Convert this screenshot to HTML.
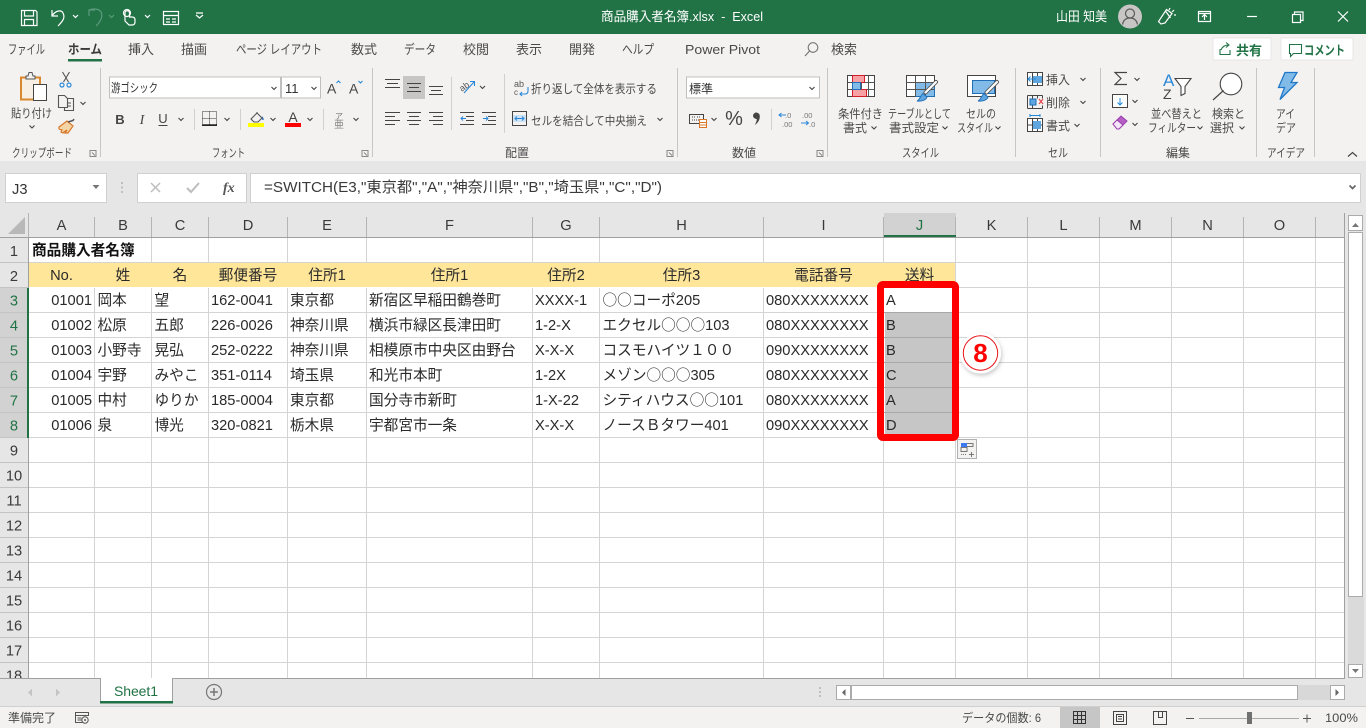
<!DOCTYPE html>
<html lang="ja"><head><meta charset="utf-8"><title>商品購入者名簿.xlsx - Excel</title>
<style>
html,body{margin:0;padding:0;background:#e6e6e6;overflow:hidden}
svg{display:block;position:absolute;left:0;top:0}
text{font-family:"Liberation Sans","Noto Sans CJK JP",sans-serif}
tspan.o{font-family:"Noto Sans CJK JP",sans-serif}
.t{font-size:13px;fill:#4a4a4a}
.r{font-size:12px;fill:#4a4a4a}
.w{font-size:13px;fill:#fff}
.c{font-size:14.67px;fill:#2a2a2a}
.m{text-anchor:middle}
.h{font-size:14.67px;fill:#3a3a3a;text-anchor:middle}
.g{fill:#217346}
.sf{font-family:"Liberation Serif",serif}
</style></head><body>
<svg width="1366" height="728" viewBox="0 0 1366 728" xmlns="http://www.w3.org/2000/svg">
<!-- backgrounds -->
<rect width="1366" height="728" fill="#e6e6e6"/>
<rect width="1366" height="34" fill="#217346"/>
<rect y="34" width="1366" height="127" fill="#f3f2f1"/>

<!-- QAT icons -->
<g fill="none" stroke="#fff" stroke-width="1.2">
<path d="M21.500 10.500h14l1.500 1.500v13.500h-15.500z"/><path d="M24.500 10.500v5.500h9v-5.500M24.500 25.500v-6h9v6"/>
<path d="M52 10v6h6M52 16c3-5 9-7 11-3 2 4 1 7-5 13"/>
<path d="M73 15l2.500 2.500 2.500-2.500M145 15l2.500 2.500 2.500-2.500"/>
<path d="M125 21v-8a2.200 2.200 0 0 1 4.500 0v4h2.500c2 0 3 1 3 3v2c0 2-1 3-3 3h-3l-4-4z"/><circle cx="127" cy="13" r="3.500"/>
<rect x="163.500" y="11.500" width="15" height="13"/><path d="M163.500 15.500h15M166 19h4M172 19h4M166 22h4M172 22h4"/>
<path d="M196 15l3.500 3 3.500-3M196 13h7"/>
</g>
<path d="M89 16v-6h6M89 10c5-2 10-1 12 2 2 4 0 9-5 14M109 15l2.500 2.500 2.500-2.500" fill="none" stroke="#5c9a7c" stroke-width="1.200"/>

<!-- title -->
<text x="601" y="21" class="w" textLength="162" lengthAdjust="spacingAndGlyphs">商品購入者名簿.xlsx &#160;- &#160;Excel</text>
<text x="1056" y="21" class="w" textLength="51" lengthAdjust="spacingAndGlyphs">山田 知美</text>
<circle cx="1130" cy="16.500" r="12" fill="#c8c6c4"/>
<g fill="none" stroke="#5a5a5a" stroke-width="1.200"><circle cx="1130" cy="13.500" r="4.500"/><path d="M1122.500 24.500c1-5 4-6.500 7.500-6.500s6.500 1.500 7.500 6.500"/></g>
<g fill="none" stroke="#fff" stroke-width="1.200">
<path d="M1161 24l-2.500-2.500 8-12 5.500 4-7 9.500zM1165.500 11l5 7M1172 12l2-2M1174 15h2M1169 10l1-2"/>
<rect x="1198.500" y="11.500" width="12" height="10"/><path d="M1198.500 13.500h12M1204.500 20v-5M1202 17l2.500-2.500 2.500 2.500"/>
<path d="M1247 16.500h10"/>
<rect x="1292.500" y="14.500" width="8" height="8"/><path d="M1294.500 14.500v-2.500h8.500v8.500h-2.500"/>
<path d="M1338 11.500l10 10M1348 11.500l-10 10"/>
</g>

<!-- tabs -->
<text x="8" y="54" class="t" textLength="37" lengthAdjust="spacingAndGlyphs">ファイル</text>
<text x="68" y="54" class="t" font-weight="700" textLength="34" lengthAdjust="spacingAndGlyphs" style="fill:#3a3a3a">ホーム</text>
<text x="128" y="54" class="t" textLength="26" lengthAdjust="spacingAndGlyphs">挿入</text>
<text x="181" y="54" class="t" textLength="26" lengthAdjust="spacingAndGlyphs">描画</text>
<text x="236" y="54" class="t" textLength="86" lengthAdjust="spacingAndGlyphs">ページ レイアウト</text>
<text x="351" y="54" class="t" textLength="26" lengthAdjust="spacingAndGlyphs">数式</text>
<text x="404" y="54" class="t" textLength="32" lengthAdjust="spacingAndGlyphs">データ</text>
<text x="463" y="54" class="t" textLength="26" lengthAdjust="spacingAndGlyphs">校閲</text>
<text x="516" y="54" class="t" textLength="26" lengthAdjust="spacingAndGlyphs">表示</text>
<text x="569" y="54" class="t" textLength="26" lengthAdjust="spacingAndGlyphs">開発</text>
<text x="622" y="54" class="t" textLength="32" lengthAdjust="spacingAndGlyphs">ヘルプ</text>
<text x="685" y="54" class="t" textLength="75" lengthAdjust="spacingAndGlyphs">Power Pivot</text>
<text x="831" y="54" class="t" textLength="26" lengthAdjust="spacingAndGlyphs">検索</text>
<rect x="68" y="59" width="34" height="2.500" class="g"/>
<path d="M805 56l5-5.500" stroke="#777" stroke-width="1.200" fill="none"/><circle cx="813" cy="47.500" r="4.800" fill="none" stroke="#777" stroke-width="1.100"/>

<!-- share / comment -->
<rect x="1213" y="38" width="58" height="22" rx="1" fill="#fff" stroke="#e8e6e4"/>
<rect x="1281" y="38" width="72" height="22" rx="1" fill="#fff" stroke="#e8e6e4"/>
<path d="M1220 49v5.500h10V50M1221 50c1-3 4-5 7-5M1226 42.500l3 2.500-3 2.500" fill="none" stroke="#217346" stroke-width="1.100"/>
<path d="M1289.500 44.500h12v9h-8l-3 3v-3h-1z" fill="none" stroke="#217346" stroke-width="1.100"/>
<text x="1236" y="55" font-size="13" font-weight="700" fill="#217346" textLength="26" lengthAdjust="spacingAndGlyphs">共有</text>
<text x="1304" y="55" font-size="13" font-weight="700" fill="#217346" textLength="41" lengthAdjust="spacingAndGlyphs">コメント</text>

<!-- ribbon separators -->
<path d="M100.500 68v89M372.500 68v89M677.500 68v89M827.500 68v89M1015.500 68v89M1100.500 68v89M1256.500 68v89M1314.500 68v89" stroke="#c8c6c4" fill="none"/>
<path d="M194.500 109v21M240.500 109v21M323.500 109v21M451.500 77v53M504.500 74v59M771.500 109v21" stroke="#d2d0ce" fill="none"/>

<!-- Clipboard -->
<path d="M21 77.500h19v22h-19z" fill="#f8efe4" stroke="#d8882e" stroke-width="2"/>
<path d="M26 79h9v-3h-2l-1-3.500h-3l-1 3.500h-2z" fill="#f3f2f1" stroke="#555"/>
<rect x="33.500" y="84.500" width="13" height="16" fill="#fff" stroke="#444"/>
<text x="11" y="117.500" class="r" textLength="41" lengthAdjust="spacingAndGlyphs">貼り付け</text>
<g fill="none" stroke="#555" stroke-width="1.100"><path d="M62.500 72l6 10M69.500 72l-6 10"/>
<path d="M58.500 95.500h6l3 3v9h-9zM67.500 98.500h6v12h-9v-3"/><path d="M67 103h4M67 106h4"/>
</g>
<circle cx="62" cy="85" r="2" fill="none" stroke="#2b88d8" stroke-width="1.200"/><circle cx="69" cy="85" r="2" fill="none" stroke="#2b88d8" stroke-width="1.200"/>
<path d="M59 127l8-6 6 5-5 7h-3l2-3-3 2-1 1-2-1 1-2-3-1z" fill="#f5d5a6" stroke="#d8782a" stroke-width="1.200"/>
<path d="M68 122l5-1.500 1-1.500" fill="none" stroke="#555" stroke-width="1.500"/>
<text x="12" y="157" class="r" textLength="60" lengthAdjust="spacingAndGlyphs">クリップボード</text>

<!-- Font -->
<rect x="109.500" y="77" width="171" height="21" fill="#fff" stroke="#c0bfbe"/>
<rect x="281.500" y="77" width="39" height="21" fill="#fff" stroke="#c0bfbe"/>
<text x="111" y="92" class="r" textLength="47" lengthAdjust="spacingAndGlyphs" style="fill:#333">游ゴシック</text>
<text x="285" y="93" font-size="13" fill="#333">11</text>
<text x="327" y="93.500" font-size="14" fill="#444">A</text><text x="349" y="93.500" font-size="14" fill="#444">A</text>
<path d="M336.500 83l2-2 2 2M358.500 81l2 2 2-2" fill="none" stroke="#2b88d8" stroke-width="1.100"/>
<text x="120" y="124" font-size="13" font-weight="700" fill="#444" class="m">B</text>
<text x="142" y="124" font-size="14" font-style="italic" fill="#444" class="m sf">I</text>
<text x="163" y="123" font-size="13" fill="#444" class="m">U</text>
<path d="M158.500 125.500h9" stroke="#444"/>
<path d="M202.500 111.500h14v13h-14zM209.500 111.500v13M202.500 118.500h14" stroke="#333" stroke-dasharray="1 1" fill="none" shape-rendering="crispEdges"/>
<rect x="202" y="124.500" width="15" height="1.500" fill="#222"/>
<path d="M251 119l6-6 5 5-4 4h-4zM257 113v-1" fill="none" stroke="#555" stroke-width="1.100"/>
<path d="M262 117c1 1 1 2 1 3" fill="none" stroke="#2b6ab0" stroke-width="1.400"/>
<rect x="248" y="123" width="16" height="4" fill="#ff0"/>
<text x="293" y="122" font-size="14" fill="#444" class="m">A</text>
<rect x="285" y="123" width="16" height="4" fill="#f00"/>
<text x="339" y="119" font-size="8" fill="#777" class="m">ア</text>
<text x="339" y="128" font-size="10" fill="#888" class="m">亜</text>
<text x="212" y="157" class="r" textLength="33" lengthAdjust="spacingAndGlyphs">フォント</text>

<!-- Alignment -->
<rect x="403" y="76" width="22" height="23" fill="#c8c6c4"/>
<path d="M385 79.500h15M387 83.500h11M385 87.500h15M407 83.500h14M409 87.500h10M407 91.500h14M429 86.500h14M431 90.500h10M429 94.500h14M385 112.500h15M385 116.500h10M385 120.500h15M385 124.500h10M407 112.500h14M409 116.500h10M407 120.500h14M409 124.500h10M429 112.500h14M433 116.500h10M429 120.500h14M433 124.500h10M460 112.500h14M466 116.500h8M466 120.500h8M460 124.500h14M482 112.500h14M488 116.500h8M488 120.500h8M482 124.500h14" stroke="#444" fill="none"/>
<path d="M466 118.500h-5M463 116.500l-2 2 2 2M483 118.500h5M486 116.500l2 2-2 2" stroke="#2b88d8" fill="none"/>
<text x="460" y="90" font-size="9" fill="#555" transform="rotate(-35 464 88)">ab</text>
<path d="M464 93l10-11M470 81.500h4.500v4.500" stroke="#2b88d8" fill="none" stroke-width="1.100"/>
<text x="514" y="87" font-size="9" fill="#555">ab</text>
<text x="514" y="95" font-size="8" fill="#555">c</text>
<path d="M528 87v4c0 2-1 3-3 3h-5M522 92l-2 2 2 2" stroke="#2b88d8" fill="none" stroke-width="1.100"/>
<text x="531" y="93" class="r" textLength="126" lengthAdjust="spacingAndGlyphs">折り返して全体を表示する</text>
<rect x="512.500" y="111.500" width="14" height="14" fill="#f3f2f1" stroke="#444"/>
<rect x="513" y="115" width="13" height="7" fill="#cde3f5"/>
<path d="M515 118.500h9M517 116.500l-2 2 2 2M522 116.500l2 2-2 2" stroke="#2b88d8" fill="none"/>
<text x="531" y="125" class="r" textLength="116" lengthAdjust="spacingAndGlyphs">セルを結合して中央揃え</text>
<text x="505" y="157" class="r" textLength="24" lengthAdjust="spacingAndGlyphs">配置</text>

<!-- Number -->
<rect x="686.500" y="77" width="133" height="21" fill="#fff" stroke="#c0bfbe"/>
<text x="689" y="93" class="r" textLength="24" lengthAdjust="spacingAndGlyphs" style="fill:#333">標準</text>
<rect x="689.500" y="114.500" width="14" height="9" fill="none" stroke="#444"/>
<path d="M692 117h3M697 117h4M692 120h9" stroke="#444" stroke-dasharray="1 1"/>
<rect x="699.500" y="119.500" width="7" height="8" fill="#fff" stroke="#d8782a"/>
<path d="M700 122.500h6M700 125h6" stroke="#d8782a"/>
<text x="734" y="125" font-size="20" fill="#444" class="m">%</text>
<path d="M753 115.500a3.400 3.400 0 1 1 6.800 1c0 3.500-2 6.500-5 8.500 1-2 2-4 2-6-2 0-3.800-1.500-3.800-3.500z" fill="#444"/>
<text x="785" y="118" font-size="7.500" fill="#777">.0</text><text x="782" y="127" font-size="7.500" fill="#777">.00</text>
<path d="M779 115h7M781.500 113l-2.500 2 2.500 2" stroke="#2b88d8" fill="none"/>
<text x="802" y="118" font-size="7.500" fill="#777">.00</text><text x="809" y="127" font-size="7.500" fill="#777">.0</text>
<path d="M801 123h7M806 121l2.500 2-2.500 2" stroke="#2b88d8" fill="none"/>
<text x="732" y="157" class="r" textLength="24" lengthAdjust="spacingAndGlyphs">数値</text>

<!-- Styles -->
<rect x="847.500" y="75.500" width="27" height="21" fill="#fff" stroke="#444"/>
<path d="M847.500 82.500h27M847.500 89.500h27M854.500 75.500v21M861.500 75.500v21M868.500 75.500v21" stroke="#555" fill="none"/>
<rect x="852.500" y="75.500" width="12" height="7" fill="#f8a1a4" stroke="#d01f2a"/>
<rect x="852.500" y="89.500" width="14" height="7" fill="#f8a1a4" stroke="#d01f2a"/>
<rect x="852.500" y="82.500" width="8" height="7" fill="#83bbe8" stroke="#1f6fb7"/>
<text x="838" y="118" class="r" textLength="45" lengthAdjust="spacingAndGlyphs">条件付き</text>
<text x="843" y="132" class="r" textLength="24" lengthAdjust="spacingAndGlyphs">書式</text>
<rect x="906.500" y="75.500" width="28" height="21" fill="#fff" stroke="#444"/>
<rect x="915.500" y="82.500" width="19" height="14" fill="#83bbe8" stroke="#1f6fb7"/>
<path d="M906.500 82.500h28M906.500 89.500h28M915.500 75.500v21M925.500 75.500v21" stroke="#555" fill="none"/>
<path d="M936 82l-10.500 10.500" stroke="#555" stroke-width="4" stroke-linecap="round" fill="none"/><path d="M936 82l-10.500 10.500" stroke="#fff" stroke-width="2.200" stroke-linecap="round" fill="none"/>
<path d="M917 101c3-1 3-5 6-7.500l4 3.500c-1 3-5 4.500-10 4z" fill="#5fa6e0" stroke="#1f6fb7"/>
<text x="888" y="118" class="r" textLength="63" lengthAdjust="spacingAndGlyphs">テーブルとして</text>
<text x="889" y="132" class="r" textLength="50" lengthAdjust="spacingAndGlyphs">書式設定</text>
<rect x="967.500" y="75.500" width="28" height="21" fill="#fff" stroke="#444"/>
<rect x="972.500" y="80.500" width="22" height="13" fill="#83bbe8" stroke="#1f6fb7"/>
<path d="M997 82l-10.500 10.500" stroke="#555" stroke-width="4" stroke-linecap="round" fill="none"/><path d="M997 82l-10.500 10.500" stroke="#fff" stroke-width="2.200" stroke-linecap="round" fill="none"/>
<path d="M978 101c3-1 3-5 6-7.500l4 3.500c-1 3-5 4.500-10 4z" fill="#5fa6e0" stroke="#1f6fb7"/>
<text x="966" y="118" class="r" textLength="30" lengthAdjust="spacingAndGlyphs">セルの</text>
<text x="957" y="132" class="r" textLength="36" lengthAdjust="spacingAndGlyphs">スタイル</text>
<text x="902" y="157" class="r" textLength="37" lengthAdjust="spacingAndGlyphs">スタイル</text>

<!-- Cells -->
<g fill="none" stroke="#444">
<rect x="1027.500" y="72.500" width="15" height="13" fill="#fff"/><path d="M1027.500 79h15M1032.500 72.500v13M1037.500 72.500v13"/>
<path d="M1027.500 95.500h15M1027.500 108.500h15M1027.500 95.500v13M1042.500 95.500v3M1042.500 105.500v3M1032.500 95.500v13M1037.500 95.500v3"/>
<rect x="1027.500" y="118.500" width="15" height="13" fill="#fff"/><path d="M1027.500 125h15M1032.500 118.500v13M1037.500 118.500v13"/>
</g>
<rect x="1033" y="76" width="9" height="7" fill="#5fa6e0"/>
<path d="M1036 79h-8M1030.500 76.500l-2.500 2.500 2.500 2.500" stroke="#1f88d8" fill="none"/>
<rect x="1030" y="99" width="6" height="6" fill="#5fa6e0" stroke="#1f6fb7"/>
<path d="M1039 99l4 5M1043 99l-4 5" stroke="#e8484c" fill="none" stroke-width="1.200"/>
<rect x="1033" y="121" width="8" height="8" fill="#5fa6e0"/>
<path d="M1030 115.500h10M1030 114v3M1040 114v3" stroke="#1f88d8" fill="none"/>
<text x="1046" y="84" class="r" textLength="24" lengthAdjust="spacingAndGlyphs">挿入</text>
<text x="1046" y="107" class="r" textLength="24" lengthAdjust="spacingAndGlyphs">削除</text>
<text x="1046" y="130" class="r" textLength="24" lengthAdjust="spacingAndGlyphs">書式</text>
<text x="1048" y="157" class="r" textLength="20" lengthAdjust="spacingAndGlyphs">セル</text>

<!-- Editing -->
<path d="M1127 72.500h-12l6 6-6 6h12" fill="none" stroke="#444" stroke-width="1.200"/>
<rect x="1112.500" y="94.500" width="15" height="13" fill="#fff" stroke="#444"/>
<path d="M1120 98v7M1117.500 102.500l2.500 2.500 2.500-2.500" stroke="#1f88d8" fill="none"/>
<path d="M1113 124l8-8 6 5-8 8h-2z" fill="#b55fc4" stroke="#9a3fae"/><path d="M1117 120l6 5-4 4h-2l-4-5z" fill="#f5e6f7" stroke="#9a3fae"/>
<text x="1163" y="86" font-size="17" fill="#2b88d8">A</text>
<text x="1163" y="99" font-size="14" fill="#444">Z</text>
<path d="M1175 78.500h16l-6 8v7l-4 2v-9z" fill="#fff" stroke="#444" stroke-width="1.100"/>
<text x="1151" y="118" class="r" textLength="51" lengthAdjust="spacingAndGlyphs">並べ替えと</text>
<text x="1148" y="132" class="r" textLength="48" lengthAdjust="spacingAndGlyphs">フィルター</text>
<circle cx="1231" cy="84" r="10.800" fill="#fff" stroke="#444" stroke-width="1.100"/>
<path d="M1213 100l10.500-9.500" stroke="#444" stroke-width="1.200" fill="none"/>
<text x="1212" y="118" class="r" textLength="33" lengthAdjust="spacingAndGlyphs">検索と</text>
<text x="1210" y="132" class="r" textLength="24" lengthAdjust="spacingAndGlyphs">選択</text>
<text x="1166" y="157" class="r" textLength="24" lengthAdjust="spacingAndGlyphs">編集</text>

<!-- Ideas -->
<path d="M1285 72.500h12l-6 10h6l-17 17 4.500-12h-6z" fill="#83bbe8" stroke="#1f78c8" stroke-width="1.300"/>
<text x="1276" y="118" class="r" textLength="19" lengthAdjust="spacingAndGlyphs">アイ</text>
<text x="1276" y="132" class="r" textLength="20" lengthAdjust="spacingAndGlyphs">デア</text>
<text x="1267" y="157" class="r" textLength="38" lengthAdjust="spacingAndGlyphs">アイデア</text>

<!-- ribbon chevrons -->
<path d="M29.500 125.500l2.500 2.500 2.500-2.500M80.500 102l2.500 2.500 2.500-2.500M271.500 87l2.500 2.500 2.500-2.500M311.500 87l2.500 2.500 2.500-2.500M178.500 118l2.500 2.500 2.500-2.500M224.500 118l2.500 2.500 2.500-2.500M270.500 118l2.500 2.500 2.500-2.500M307.500 118l2.500 2.500 2.500-2.500M353.500 118l2.500 2.500 2.500-2.500M480 86l2.500 2.500 2.500-2.500M657.500 118l2.500 2.500 2.500-2.500M809.500 87l2.500 2.500 2.500-2.500M711.500 118l2.500 2.500 2.500-2.500M871.500 126.500l2.500 2.500 2.500-2.500M942.500 126.500l2.500 2.500 2.500-2.500M995.500 126.500l2.500 2.500 2.500-2.500M1080.500 78l2.500 2.500 2.500-2.500M1080.500 101l2.500 2.500 2.500-2.500M1074.500 124l2.500 2.500 2.500-2.500M1134.500 78l2.500 2.500 2.500-2.500M1132.500 100l2.500 2.500 2.500-2.500M1132.500 123l2.500 2.500 2.500-2.500M1197.500 126.500l2.500 2.500 2.500-2.500M1239.500 126.500l2.500 2.500 2.500-2.500" fill="none" stroke="#444" stroke-width="1.100"/>
<path d="M1348 156.500l4.500-4 4.500 4" fill="none" stroke="#444" stroke-width="1.200"/>
<!-- launchers -->
<path d="M90 150.500h6v6h-6zM92 152.500l3 3M362 150.500h6v6h-6zM364 152.500l3 3M667 150.500h6v6h-6zM669 152.500l3 3M817 150.500h6v6h-6zM819 152.500l3 3" fill="none" stroke="#888"/>

<!-- Formula bar -->
<rect x="5.500" y="173.500" width="101" height="29" fill="#fff" stroke="#d0d0d0"/>
<text x="12" y="194" font-size="14.670" fill="#333">J3</text>
<path d="M92.500 185h7l-3.500 4z" fill="#777"/>
<path d="M122 182v2M122 186.500v2M122 191v2" stroke="#b0b0b0" stroke-width="1.500" fill="none"/>
<rect x="137.500" y="173.500" width="109" height="29" fill="#fff" stroke="#d0d0d0"/>
<rect x="250.500" y="173.500" width="1110" height="29" fill="#fff" stroke="#d0d0d0"/>
<path d="M151 183l9 9M160 183l-9 9" stroke="#bdbdbd" stroke-width="1.500" fill="none"/>
<path d="M187 188l4 4 8-9" stroke="#bdbdbd" stroke-width="2" fill="none"/>
<text x="223" y="192" font-size="14" font-style="italic" font-weight="700" fill="#555" class="sf">fx</text>
<text x="264" y="192" class="c" textLength="398" lengthAdjust="spacingAndGlyphs" style="fill:#3a3a3a">=SWITCH(E3,"東京都","A","神奈川県","B","埼玉県","C","D")</text>
<path d="M1349.500 185.500l3 3 3-3" fill="none" stroke="#666" stroke-width="1.700"/>

<!-- Sheet area -->
<rect x="0" y="238" width="1345" height="440" fill="#fff"/>
<rect x="0" y="238" width="28" height="440" fill="#e6e6e6"/>
<rect x="0" y="288" width="28" height="150" fill="#d2d2d2"/>
<rect x="884" y="213" width="72" height="24" fill="#d2d2d2"/>
<path d="M8 234h17v-17z" fill="#b8b8b8"/>
<rect x="29" y="263" width="927" height="24" fill="#ffe699"/>
<g shape-rendering="crispEdges">
<path d="M29 262.500h1316M956 287.500h389M29 312.500h1316M29 337.500h1316M29 362.500h1316M29 387.500h1316M29 412.500h1316M29 437.500h1316M29 462.500h1316M29 487.500h1316M29 512.500h1316M29 537.500h1316M29 562.500h1316M29 587.500h1316M29 612.500h1316M29 637.500h1316M29 662.500h1316" stroke="#d4d4d4" fill="none"/>
<path d="M94.500 288v390M151.500 238v25M151.500 288v390M208.500 238v25M208.500 288v390M287.500 238v25M287.500 288v390M366.500 238v25M366.500 288v390M532.500 238v25M532.500 288v390M599.500 238v25M599.500 288v390M763.500 238v25M763.500 288v390M883.500 238v25M883.500 288v390M955.500 238v440M1027.500 238v440M1099.500 238v440M1171.500 238v440M1243.500 238v440M1315.500 238v440" stroke="#d4d4d4" fill="none"/>
<path d="M28.500 213v24M94.500 217v20M151.500 217v20M208.500 217v20M287.500 217v20M366.500 217v20M532.500 217v20M599.500 217v20M763.500 217v20M883.500 217v20M955.500 217v20M1027.500 217v20M1099.500 217v20M1171.500 217v20M1243.500 217v20M1315.500 217v20" stroke="#b4b4b4" fill="none"/>
<path d="M0 237.500h1345M28.500 238v440M1344.500 213v465" stroke="#a0a0a0" fill="none"/>
<path d="M0 262.500h28M0 287.500h28M0 312.500h28M0 337.500h28M0 362.500h28M0 387.500h28M0 412.500h28M0 437.500h28M0 462.500h28M0 487.500h28M0 512.500h28M0 537.500h28M0 562.500h28M0 587.500h28M0 612.500h28M0 637.500h28M0 662.500h28" stroke="#c4c4c4" fill="none"/>
<rect x="27" y="288" width="2" height="150" fill="#217346"/>
<rect x="884" y="235" width="72" height="2" fill="#217346"/>
</g>

<!-- Column letters -->
<text x="61.500" y="230" class="h">A</text><text x="123" y="230" class="h">B</text><text x="180" y="230" class="h">C</text><text x="248" y="230" class="h">D</text><text x="327" y="230" class="h">E</text><text x="449.500" y="230" class="h">F</text><text x="566" y="230" class="h">G</text><text x="681.500" y="230" class="h">H</text><text x="823.500" y="230" class="h">I</text><text x="919.500" y="230" class="h" style="fill:#217346">J</text><text x="991.500" y="230" class="h">K</text><text x="1063.500" y="230" class="h">L</text><text x="1135.500" y="230" class="h">M</text><text x="1207.500" y="230" class="h">N</text><text x="1279.500" y="230" class="h">O</text>
<!-- Row numbers -->
<text x="14" y="256" class="h">1</text><text x="14" y="281" class="h">2</text>
<text x="14" y="305.500" class="h" style="fill:#217346">3</text><text x="14" y="330.500" class="h" style="fill:#217346">4</text><text x="14" y="355.500" class="h" style="fill:#217346">5</text><text x="14" y="380.500" class="h" style="fill:#217346">6</text><text x="14" y="405.500" class="h" style="fill:#217346">7</text><text x="14" y="430.500" class="h" style="fill:#217346">8</text>
<text x="14" y="455.500" class="h">9</text><text x="14" y="480.500" class="h">10</text><text x="14" y="505.500" class="h">11</text><text x="14" y="530.500" class="h">12</text><text x="14" y="555.500" class="h">13</text><text x="14" y="580.500" class="h">14</text><text x="14" y="605.500" class="h">15</text><text x="14" y="630.500" class="h">16</text><text x="14" y="655.500" class="h">17</text><text x="14" y="680.500" class="h">18</text>

<!-- Cells text -->
<text x="32" y="255" class="c" font-weight="700" style="fill:#111">商品購入者名簿</text>
<text x="61.500" y="280" class="c m">No.</text><text x="123" y="280" class="c m">姓</text><text x="180" y="280" class="c m">名</text><text x="248" y="280" class="c m">郵便番号</text><text x="327" y="280" class="c m">住所1</text><text x="449.500" y="280" class="c m">住所1</text><text x="566" y="280" class="c m">住所2</text><text x="681.500" y="280" class="c m">住所3</text><text x="823.500" y="280" class="c m">電話番号</text><text x="919.500" y="280" class="c m">送料</text>

<text x="92" y="305" class="c" text-anchor="end">01001</text><text x="97.500" y="305" class="c">岡本</text><text x="154.500" y="305" class="c">望</text><text x="211" y="305" class="c">162-0041</text><text x="290" y="305" class="c">東京都</text><text x="369" y="305" class="c">新宿区早稲田鶴巻町</text><text x="535" y="305" class="c">XXXX-1</text><text x="602.500" y="305" class="c"><tspan class="o">○○</tspan>コーポ205</text><text x="766" y="305" class="c">080XXXXXXXX</text><text x="886" y="305" class="c">A</text>
<text x="92" y="330" class="c" text-anchor="end">01002</text><text x="97.500" y="330" class="c">松原</text><text x="154.500" y="330" class="c">五郎</text><text x="211" y="330" class="c">226-0026</text><text x="290" y="330" class="c">神奈川県</text><text x="369" y="330" class="c">横浜市緑区長津田町</text><text x="535" y="330" class="c">1-2-X</text><text x="602.500" y="330" class="c">エクセル<tspan class="o">○○○</tspan>103</text><text x="766" y="330" class="c">080XXXXXXXX</text>
<text x="92" y="355" class="c" text-anchor="end">01003</text><text x="97.500" y="355" class="c">小野寺</text><text x="154.500" y="355" class="c">晃弘</text><text x="211" y="355" class="c">252-0222</text><text x="290" y="355" class="c">神奈川県</text><text x="369" y="355" class="c">相模原市中央区由野台</text><text x="535" y="355" class="c">X-X-X</text><text x="602.500" y="355" class="c">コスモハイツ１００</text><text x="766" y="355" class="c">090XXXXXXXX</text>
<text x="92" y="380" class="c" text-anchor="end">01004</text><text x="97.500" y="380" class="c">宇野</text><text x="154.500" y="380" class="c">みやこ</text><text x="211" y="380" class="c">351-0114</text><text x="290" y="380" class="c">埼玉県</text><text x="369" y="380" class="c">和光市本町</text><text x="535" y="380" class="c">1-2X</text><text x="602.500" y="380" class="c">メゾン<tspan class="o">○○○</tspan>305</text><text x="766" y="380" class="c">080XXXXXXXX</text>
<text x="92" y="405" class="c" text-anchor="end">01005</text><text x="97.500" y="405" class="c">中村</text><text x="154.500" y="405" class="c">ゆりか</text><text x="211" y="405" class="c">185-0004</text><text x="290" y="405" class="c">東京都</text><text x="369" y="405" class="c">国分寺市新町</text><text x="535" y="405" class="c">1-X-22</text><text x="602.500" y="405" class="c">シティハウス<tspan class="o">○○</tspan>101</text><text x="766" y="405" class="c">080XXXXXXXX</text>
<text x="92" y="430" class="c" text-anchor="end">01006</text><text x="97.500" y="430" class="c">泉</text><text x="154.500" y="430" class="c">博光</text><text x="211" y="430" class="c">320-0821</text><text x="290" y="430" class="c">栃木県</text><text x="369" y="430" class="c">宇都宮市一条</text><text x="535" y="430" class="c">X-X-X</text><text x="602.500" y="430" class="c">ノースＢタワー401</text><text x="766" y="430" class="c">090XXXXXXXX</text>

<!-- Selection -->
<rect x="885" y="312" width="68" height="122" fill="#c6c6c6"/>
<path d="M884 312.500h69M884 337.500h69M884 362.500h69M884 387.500h69M884 412.500h69" stroke="#a8a8a8" fill="none" shape-rendering="crispEdges"/>
<text x="886" y="330" class="c">B</text><text x="886" y="355" class="c">B</text><text x="886" y="380" class="c">C</text><text x="886" y="405" class="c">A</text><text x="886" y="430" class="c">D</text>
<rect x="880.500" y="284.500" width="75" height="153" rx="2.500" fill="none" stroke="#f00" stroke-width="7"/>

<!-- Callout -->
<defs><filter id="s" x="-30%" y="-30%" width="160%" height="160%"><feDropShadow dx="1" dy="2" stdDeviation="2" flood-color="#000" flood-opacity=".22"/></filter></defs>
<circle cx="980.500" cy="353" r="20.500" fill="#fff" filter="url(#s)"/>
<circle cx="980.500" cy="353" r="17.200" fill="#fff" stroke="#e8161c" stroke-width="1"/>
<text x="980.500" y="362" font-size="26" font-weight="700" fill="#f00" text-anchor="middle">8</text>

<!-- Paste options -->
<rect x="957.500" y="439.500" width="19" height="19" fill="#f3f2f1" stroke="#b0b0b0"/>
<rect x="961" y="443" width="6" height="4" fill="#3c78f0"/><path d="M967 443.500h6v3h-6M961 447.500h6v4h-6z" fill="none" stroke="#777"/>
<path d="M961 454.500h6" stroke="#777" stroke-dasharray="1 1"/><path d="M969 454.500h5M971.500 452v5" stroke="#777"/>

<!-- V scrollbar -->
<rect x="1345" y="213" width="21" height="465" fill="#e6e6e6"/>
<rect x="1348" y="597" width="16" height="67" fill="#dadada"/>
<rect x="1348.500" y="215.500" width="14" height="15" fill="#fff" stroke="#ababab"/>
<path d="M1352 227h7l-3.500-4z" fill="#777"/>
<rect x="1348.500" y="232.500" width="14" height="364" fill="#fff" stroke="#ababab"/>
<rect x="1348.500" y="664.500" width="14" height="13" fill="#fff" stroke="#ababab"/>
<path d="M1352 669h7l-3.500 4z" fill="#777"/>

<!-- Tab bar -->
<rect x="0" y="678" width="1366" height="28" fill="#e6e6e6"/>
<path d="M0 678.500h1345" stroke="#a0a0a0" shape-rendering="crispEdges"/>
<rect x="100" y="678" width="73" height="25" fill="#fff"/>
<path d="M100.500 678v24M172.500 678v24" stroke="#a0a0a0"/>
<rect x="100" y="701" width="73" height="2.500" fill="#217346"/>
<text x="114" y="696" font-size="14" fill="#217346" textLength="44">Sheet1</text>
<path d="M32 688.500v8l-4-4zM56 688.500v8l4-4z" fill="#c4c4c4"/>
<circle cx="214" cy="692" r="7.500" fill="none" stroke="#777" stroke-width="1.200"/><path d="M210 692h8M214 688v8" stroke="#777" stroke-width="1.500"/>
<path d="M820 687v2M820 691v2M820 695v2" stroke="#b0b0b0" stroke-width="1.500"/>
<rect x="1298" y="685" width="32" height="15" fill="#d8d8d8"/>
<rect x="836.500" y="685.500" width="14" height="14" fill="#fff" stroke="#ababab"/>
<path d="M845.500 689v7l-3.500-3.500z" fill="#666"/>
<rect x="851.500" y="685.500" width="446" height="14" fill="#fff" stroke="#ababab"/>
<rect x="1330.500" y="685.500" width="14" height="14" fill="#fff" stroke="#ababab"/>
<path d="M1335.500 689v7l3.500-3.500z" fill="#666"/>

<!-- Status bar -->
<rect x="0" y="706" width="1366" height="22" fill="#f3f2f1"/>
<path d="M0 706.500h1366" stroke="#cfcfcf" shape-rendering="crispEdges"/>
<text x="8" y="722" class="r" textLength="48" lengthAdjust="spacingAndGlyphs">準備完了</text>
<path d="M75.500 712.500h13v3h-13zM75.500 715.500v7h7M77.500 718h4M77.500 720h4" fill="none" stroke="#555"/><circle cx="85" cy="720" r="3.200" fill="none" stroke="#555"/><circle cx="85" cy="720" r="1" fill="#555"/>
<text x="962" y="722" class="r" textLength="79" lengthAdjust="spacingAndGlyphs">データの個数: 6</text>
<rect x="1060" y="707" width="40" height="21" fill="#c6c6c6"/>
<path d="M1073.500 711.500h12v12h-12zM1073.500 715.500h12M1073.500 719.500h12M1077.500 711.500v12M1081.500 711.500v12" fill="none" stroke="#333"/>
<path d="M1113.500 711.500h13v13h-13zM1116.500 714.500h7v7h-7zM1118 716.500h4M1118 719h4" fill="none" stroke="#444"/>
<path d="M1153.500 711.500h13v13h-13zM1158.500 711.500v6h4v-6" fill="none" stroke="#444"/>
<path d="M1186 718.500h8M1303 718.500h8M1307 714.500v8" stroke="#555" fill="none"/>
<path d="M1199 718.500h100" stroke="#a8a8a8"/>
<rect x="1247" y="712" width="5" height="12" fill="#707070"/>
<text x="1325" y="722" class="r" textLength="33" lengthAdjust="spacingAndGlyphs">100%</text>
</svg>
</body></html>
